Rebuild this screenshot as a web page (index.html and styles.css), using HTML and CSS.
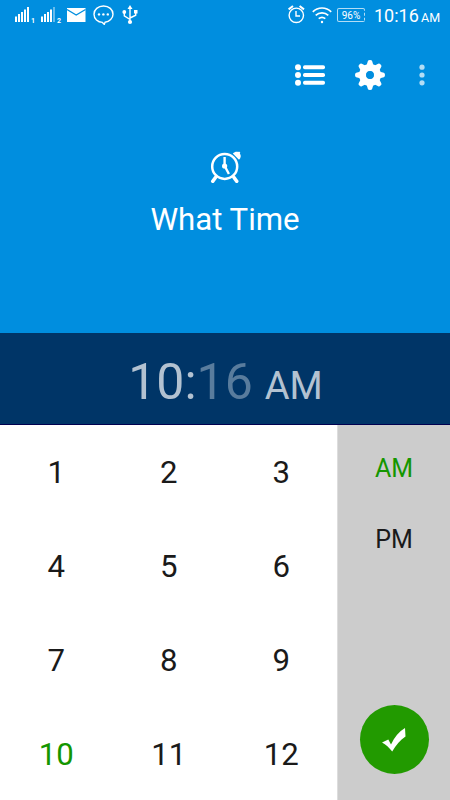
FILE: index.html
```html
<!DOCTYPE html>
<html lang="en">
<head>
<meta charset="utf-8">
<title>What Time</title>
<link rel="stylesheet" href="styles.css">
</head>
<body>
<header class="header">
  <div class="status">
    <svg class="signal" width="14" height="20" viewBox="0 0 14 20" fill="#fff"><path d="M0 14.500h2v5.500H0zM3 12h2v8H3zM6 10h2v10H6zM9 7.500h2v12.500H9zM12 5h2v15h-2z"/></svg>
    <span class="sim">1</span>
    <svg class="signal" width="14" height="20" viewBox="0 0 14 20" fill="#fff"><path d="M0 14.500h2v5.500H0zM3 12h2v8H3zM6 10h2v10H6zM9 7.500h2v12.500H9z"/><path opacity=".4" d="M12 5h2v15h-2z"/></svg>
    <span class="sim">2</span>
    <svg class="mail" width="19" height="14" viewBox="0 0 19 14"><path fill="#fff" d="M0 0h18.500v14H0z"/><path d="M0 1.500l9.200 5.500 9.300-5.500" fill="none" stroke="#008edf" stroke-width="1.300"/></svg>
    <svg class="chat" width="21" height="20" viewBox="0 0 21 20"><path d="M10.500 1C5 1 1 4.600 1 9.200s3.800 8 8.400 8.200l1.900 2 .7-2.100c4.500-.7 8-3.900 8-8.100C20 4.600 16 1 10.500 1z" fill="none" stroke="#fff" stroke-width="1.400"/><circle cx="6" cy="9.400" r="1.200" fill="#fff"/><circle cx="10.400" cy="9.400" r="1.200" fill="#fff"/><circle cx="14.800" cy="9.400" r="1.200" fill="#fff"/></svg>
    <svg class="usb" width="16" height="20" viewBox="0 0 16 20"><path d="M8 3v14M2.300 7.500v3.300L8 14.500M13.700 7v3.200L8 13" fill="none" stroke="#fff" stroke-width="1.400"/><path fill="#fff" d="M8 0l2.500 4h-5zM12 5h3.500v3.500H12z"/><circle cx="2.300" cy="7" r="1.900" fill="#fff"/><circle cx="8" cy="17" r="2.100" fill="#fff"/></svg>
    <span class="spacer"></span>
    <svg class="alarm" width="17" height="19" viewBox="0 0 17 19" fill="none" stroke="#fff" stroke-width="1.400"><circle cx="8.300" cy="10.300" r="7.200"/><path d="M8 6v5h4"/><path stroke-width="2" d="M.6 4.400L5 1M16 4.400L11.600 1"/></svg>
    <svg class="wifi" width="20" height="17" viewBox="0 0 20 17" fill="none" stroke="#fff" stroke-width="1.700"><path d="M.8 4.800C6-.3 14-.3 19.200 4.800M3.700 8.400c3.600-3.400 9-3.400 12.600 0M6.700 11.700c2-1.700 4.600-1.700 6.600 0"/><circle cx="10" cy="15" r="1.200" fill="#fff" stroke="none"/></svg>
    <span class="battery">96%</span>
    <span class="time">10:16</span><span class="ampm">AM</span>
  </div>
  <div class="actions">
    <svg class="list" width="31" height="22" viewBox="0 0 31 22" fill="#fff"><circle cx="3" cy="3.200" r="3"/><circle cx="3" cy="11" r="3"/><circle cx="3" cy="18.800" r="3"/><rect x="8" y="1.200" width="22" height="4" rx="1.800"/><rect x="8" y="9" width="22" height="4" rx="1.800"/><rect x="8" y="16.800" width="22" height="4" rx="1.800"/></svg>
    <svg class="gear" width="30" height="30" viewBox="-15 -15 30 30"><defs><path id="tooth" d="M-3.600-9L-2.200-13.800Q-1.900-15 0-15t2.200 1.200L3.600-9z"/></defs><g fill="#fff"><use href="#tooth"/><use href="#tooth" transform="rotate(45)"/><use href="#tooth" transform="rotate(90)"/><use href="#tooth" transform="rotate(135)"/><use href="#tooth" transform="rotate(180)"/><use href="#tooth" transform="rotate(225)"/><use href="#tooth" transform="rotate(270)"/><use href="#tooth" transform="rotate(315)"/></g><circle r="7.400" fill="none" stroke="#fff" stroke-width="7.200"/><circle r="3.900" fill="#008edf"/></svg>
    <svg class="more" width="6" height="22" viewBox="0 0 6 22" fill="#b3ddf5"><circle cx="3" cy="3.200" r="2.600"/><circle cx="3" cy="11" r="2.600"/><circle cx="3" cy="18.800" r="2.600"/></svg>
  </div>
  <div class="brand">
    <svg width="32" height="33" viewBox="0 0 32 33" fill="none" stroke="#fff" stroke-linecap="round"><circle cx="14.700" cy="16.400" r="12.500" stroke-width="2.500"/><path stroke-width="3.600" d="M5.500 27.500l-2.700 3.700M24 27.500l2.700 3.700"/><path stroke-width="2.400" stroke-linecap="butt" d="M14.600 7v9M14.700 16l4.200 8"/><circle cx="14.600" cy="16" r="2.600" fill="#fff" stroke="none"/><path fill="#fff" stroke="none" d="M22.800 3.600C24.500 1.800 26.500 1.300 28.300 2l.7-.6 1.300 1.200-.5.900c1.500 1.700 1.300 4.400-.8 6.200z"/></svg>
    <h1>What Time</h1>
  </div>
</header>
<section class="clock"><span class="hour">10:</span><span class="minute">16</span><span class="half">AM</span></section>
<main class="picker">
  <div class="keys">
    <span>1</span><span>2</span><span>3</span>
    <span>4</span><span>5</span><span>6</span>
    <span>7</span><span>8</span><span>9</span>
    <span class="on">10</span><span>11</span><span>12</span>
  </div>
  <aside class="side">
    <span class="period on">AM</span>
    <span class="period">PM</span>
    <button class="done" aria-label="Done"><svg width="24" height="24" viewBox="0 0 24 24"><path fill="#fff" d="M0 14.500L6.300 11.500 9 16.500C12.500 9 17 3.500 23 0l.5 8.500C18 12.500 14 17 10.200 23.500 7 19.500 4 16.500 0 14.500z"/></svg></button>
  </aside>
</main>
</body>
</html>
```
FILE: styles.css
```css
* { box-sizing: border-box; }
body { margin: 0; width: 450px; height: 800px; overflow: hidden; display: flex; flex-direction: column; font-family: Roboto, sans-serif; color: #1a1a1a; background: #fff; }
svg { display: block; flex: none; }
.header { height: 333px; background: #008edf; color: #fff; }
.status { height: 30px; display: flex; align-items: flex-start; padding: 0 9px 0 15px; }
.signal { margin-top: 2px; }
.sim { width: 12px; padding-left: 2px; margin-top: 17px; font-size: 7px; line-height: 8px; font-weight: 700; }
.mail { margin-top: 8px; }
.chat { margin: 5px 0 0 7px; }
.usb { margin: 5px 0 0 8px; }
.spacer { flex: 1; }
.alarm { margin: 5px 7px 0 0; }
.wifi { margin: 7px 5px 0 0; }
.battery { width: 28px; height: 14px; margin-top: 8px; border: 1px solid #b3ddf5; border-right-style: dashed; border-radius: 2px; font-size: 10px; line-height: 13px; text-align: center; }
.time { width: 47px; margin-left: 9px; font-size: 18px; line-height: 32px; white-space: nowrap; }
.ampm { width: 20px; font-size: 12.5px; line-height: 35px; }
.actions { height: 90px; display: flex; align-items: center; justify-content: flex-end; padding-right: 25px; }
.gear { margin: 0 34px 0 29px; }
.brand { display: flex; flex-direction: column; align-items: center; padding-top: 30px; }
.brand svg { margin-left: 1px; }
.brand h1 { margin: 17px 0 0; font-size: 31.2px; font-weight: 400; line-height: 40px; }
.clock { height: 92px; padding-left: 1px; display: flex; align-items: baseline; justify-content: center; background: #003567; border-bottom: 1px solid #00004f; line-height: 98px; font-size: 50px; }
.hour { color: #b3c2d1; }
.minute { color: #597c9d; }
.half { margin-left: 12px; font-size: 38px; color: #b3c2d1; }
.picker { flex: 1; display: flex; }
.keys { width: 337px; display: grid; grid-template-columns: repeat(3, 112.5px); grid-template-rows: repeat(4, 93.75px); font-size: 31.2px; }
.keys span { display: flex; align-items: center; justify-content: center; padding-top: 2px; }
.side { width: 113px; display: flex; flex-direction: column; align-items: center; background: #ccc; border-left: 1px solid #ddd; padding-top: 8px; }
.period { height: 71px; font-size: 25px; line-height: 71px; }
.keys .on, .side .on { color: #149600; }
.done { width: 69px; height: 69px; margin: auto 0 26px; padding: 0; border: 0; border-radius: 50%; background: #229a00; display: flex; align-items: center; justify-content: center; }
```
